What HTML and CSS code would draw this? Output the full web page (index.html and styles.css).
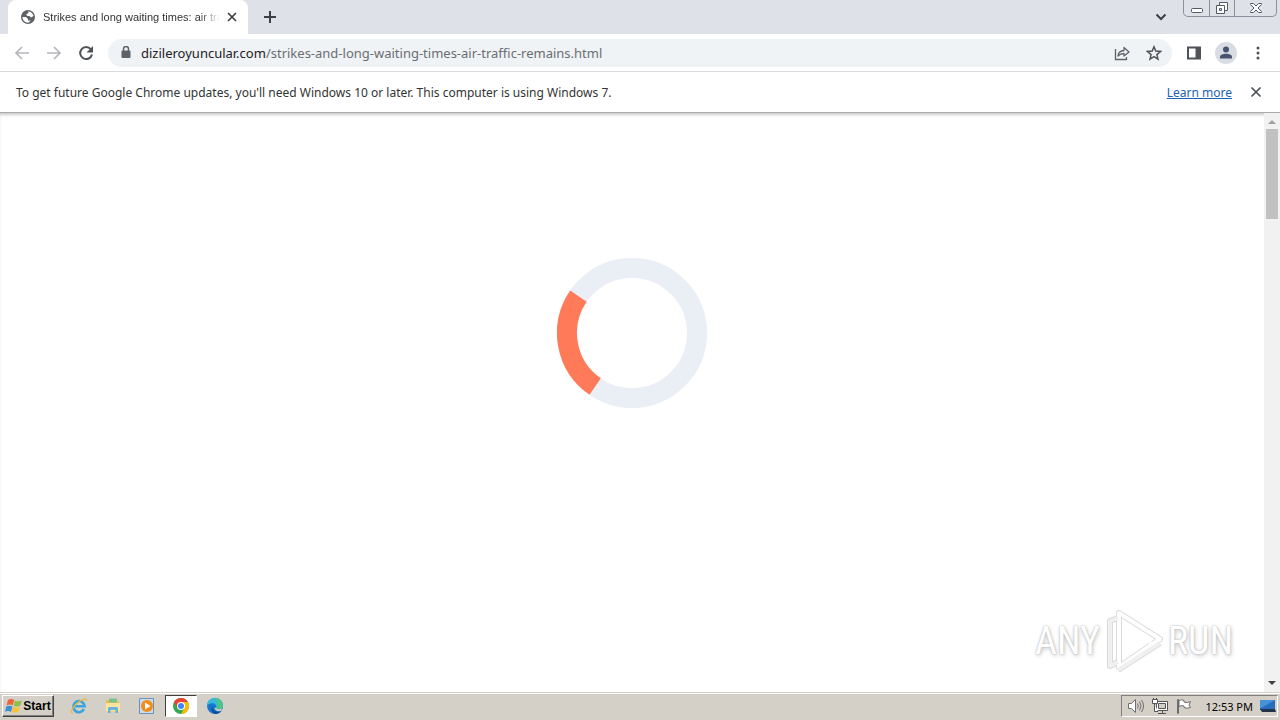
FILE: index.html
```html
<!DOCTYPE html>
<html lang="en">
<head>
  <meta charset="UTF-8">
  <title>Strikes and long waiting times: air traffic remains</title>
  <link rel="stylesheet" href="styles.css">
</head>
<body>
  <!-- Tab strip -->
  <header class="tab-strip">
    <div class="tab">
      <svg class="favicon" viewBox="0 0 16 16" width="16" height="16">
        <circle cx="8" cy="8" r="7" fill="#5f6368"/>
        <path d="M8 2.500c2.500-.2 5 1.700 5.500 4.500L11 8.500 9.500 7H7.500L6 5.500 8.500 4zM2.500 8H6l2 2v1.500H10.500l-1.500 2C5.500 14 2.500 11.500 2.500 8z" fill="#fff"/>
      </svg>
      <span class="tab-title">Strikes and long waiting times: air traffic remains</span>
      <button class="tab-close" aria-label="Close tab">
        <svg viewBox="0 0 16 16" width="16" height="16"><path d="M4 4l8 8M12 4l-8 8" stroke="#3c4043" stroke-width="1.700"/></svg>
      </button>
    </div>
    <button class="icon-btn new-tab" aria-label="New tab">
      <svg viewBox="0 0 16 16" width="16" height="16"><path d="M8 2v12M2 8h12" stroke="#3c4043" stroke-width="2"/></svg>
    </button>
    <button class="icon-btn tab-search" aria-label="Search tabs">
      <svg viewBox="0 0 16 16" width="16" height="16"><path d="M3.500 5.500L8 10l4.500-4.500" fill="none" stroke="#3c4043" stroke-width="2"/></svg>
    </button>
    <div class="window-controls">
      <button class="win-min" aria-label="Minimize">
        <svg viewBox="0 0 14 14" width="14" height="14"><rect x="1.500" y="7.500" width="11" height="4" rx="1" fill="#fff" stroke="#555b66"/></svg>
      </button>
      <button class="win-max" aria-label="Restore">
        <svg viewBox="0 0 14 14" width="14" height="14"><path d="M4.500 1.500h8v8h-8z" fill="#fff" stroke="#555b66"/><path d="M1.500 4.500h8v8h-8z" fill="#fff" stroke="#555b66"/><path d="M4.500 7.500h2v2h-2z" fill="#dee1e6" stroke="#555b66"/></svg>
      </button>
      <button class="win-close" aria-label="Close">
        <svg viewBox="0 0 14 14" width="14" height="14"><path d="M1.500 2.500h3L7 5l2.500-2.500h3v1L9 7l3.500 3.500v1h-3L7 9l-2.500 2.500h-3v-1L5 7 1.500 3.500z" fill="#fff" stroke="#555b66"/></svg>
      </button>
    </div>
  </header>

  <!-- Toolbar -->
  <nav class="toolbar">
    <button class="icon-btn" aria-label="Back">
      <svg viewBox="0 0 16 16" width="16" height="16"><path d="M15 8H2.500M8 2L2 8l6 6" fill="none" stroke="#b5b7ba" stroke-width="1.700"/></svg>
    </button>
    <button class="icon-btn" aria-label="Forward">
      <svg viewBox="0 0 16 16" width="16" height="16"><path d="M1 8h12.500M8 2l6 6-6 6" fill="none" stroke="#b5b7ba" stroke-width="1.700"/></svg>
    </button>
    <button class="icon-btn" aria-label="Reload">
      <svg viewBox="0 0 16 16" width="16" height="16"><path d="M12.800 4.200A6 6 0 1 0 14 9.500" fill="none" stroke="#4f5358" stroke-width="2"/><path d="M15 1v6.500H8.500z" fill="#4f5358"/></svg>
    </button>
    <div class="omnibox">
      <svg class="lock" viewBox="0 0 12 14" width="12" height="14"><rect x="1.500" y="4.500" width="9" height="7.500" rx="1" fill="#5f6368"/><path d="M3.500 5V3a2.500 2.500 0 0 1 5 0v2" fill="none" stroke="#5f6368" stroke-width="1.500"/></svg>
      <div class="url"><span class="host">dizileroyuncular.com</span>/strikes-and-long-waiting-times-air-traffic-remains.html</div>
      <button class="icon-btn" aria-label="Share">
        <svg viewBox="0 0 16 16" width="16" height="16"><path d="M1.500 4v10.500h11V12" fill="none" stroke="#5f6368" stroke-width="1.300"/><path d="M4 11c.3-3.600 2.500-5.300 6-5.500V2.500L15 7l-5 4V8.500c-2.500 0-4.500.8-6 2.500z" fill="none" stroke="#5f6368" stroke-width="1.300" stroke-linejoin="round"/></svg>
      </button>
      <button class="icon-btn" aria-label="Bookmark">
        <svg viewBox="0 0 16 16" width="16" height="16"><path d="M8 1.800l1.800 4.300 4.700.4-3.600 3.100 1.100 4.600L8 11.700l-4 2.500 1.100-4.600-3.600-3.100 4.700-.4z" fill="none" stroke="#4f5358" stroke-width="1.500"/></svg>
      </button>
    </div>
    <div class="toolbar-actions">
      <button class="icon-btn" aria-label="Side panel">
        <svg viewBox="0 0 16 16" width="16" height="16"><path d="M2 2.500h12v11H2z" fill="none" stroke="#4f5358" stroke-width="2"/><path d="M9.500 2H14v12H9.500z" fill="#4f5358"/></svg>
      </button>
      <button class="icon-btn" aria-label="Profile">
        <svg viewBox="0 0 22 22" width="22" height="22"><circle cx="11" cy="11" r="11" fill="#d8dce3"/><circle cx="11" cy="7.500" r="3" fill="#47536f"/><path d="M5 16.500v-1.500c0-2 3-3.200 6-3.200s6 1.200 6 3.200v1.500z" fill="#47536f"/></svg>
      </button>
      <button class="icon-btn" aria-label="Menu">
        <svg viewBox="0 0 16 16" width="16" height="16" fill="#4f5358"><circle cx="8" cy="3" r="1.500"/><circle cx="8" cy="8" r="1.500"/><circle cx="8" cy="13" r="1.500"/></svg>
      </button>
    </div>
  </nav>

  <!-- Info bar -->
  <section class="infobar">
    <p>To get future Google Chrome updates, you'll need Windows 10 or later. This computer is using Windows 7.</p>
    <a href="#">Learn more</a>
    <button class="infobar-close" aria-label="Dismiss">
      <svg viewBox="0 0 16 16" width="16" height="16"><path d="M3.500 3.500l9 9M12.500 3.500l-9 9" stroke="#4f5358" stroke-width="1.700"/></svg>
    </button>
  </section>

  <!-- Page -->
  <main class="viewport">
    <div class="page">
      <svg class="spinner" viewBox="0 0 150 150" width="150" height="150">
        <circle cx="75" cy="75" r="65" fill="none" stroke="#eaeff6" stroke-width="20"/>
        <path d="M38.200 128.600A65 65 0 0 1 21.400 38.200" fill="none" stroke="#ff7a59" stroke-width="20"/>
      </svg>
    </div>
    <div class="scrollbar">
      <svg viewBox="0 0 16 16" width="16" height="16"><path d="M4 11l4-4 4 4z" fill="#a0a0a0"/></svg>
      <div class="thumb"></div>
      <svg class="arrow-down" viewBox="0 0 16 16" width="16" height="16"><path d="M4 5l4 4 4-4z" fill="#404040"/></svg>
    </div>
    <div class="watermark">
      <span>ANY</span>
      <svg viewBox="0 0 60 64" width="60" height="64" fill="none" stroke-linejoin="round">
        <g stroke="#dadada" stroke-width="6">
          <path d="M15 4l41 26-41 28z"/><path d="M14 9l-8 3v45l8-4M14 61l42-27"/>
        </g>
        <g stroke="#fff" stroke-width="4">
          <path d="M15 4l41 26-41 28z"/><path d="M20 18l29 17" stroke-width="3"/><path d="M14 9l-8 3v45l8-4M14 61l42-27" stroke="#f0f0f0"/>
        </g>
      </svg>
      <span>RUN</span>
    </div>
  </main>

  <!-- Taskbar -->
  <footer class="taskbar">
    <button class="start">
      <svg viewBox="0 0 18 16" width="18" height="16">
        <path d="M3 2c2.500-1.500 4.500-1.200 6.200 0L7.800 7.300C6 6.300 4 6.300 1.600 7.300z" fill="#ee6338"/>
        <path d="M10 2.500c2.200 1.200 4.500 1 7 0l-1.700 5.300c-2.200 1-4.500.9-6.700-.1z" fill="#8cc04a"/>
        <path d="M1.300 8.300c2.500-1 4.500-.8 6.200.2L6 14c-1.800-1.200-3.800-1.200-6-.3z" fill="#3c91d5"/>
        <path d="M8.300 8.700c2.200 1 4.500 1 6.700.1l-1.600 5.200c-2.200 1-4.400.9-6.500-.1z" fill="#f9c333"/>
      </svg>
      Start
    </button>
    <div class="quick-launch">
      <button class="task" aria-label="Internet Explorer">
        <svg viewBox="0 0 18 18" width="18" height="18"><path d="M14 12.200a5.600 5.600 0 1 1 .6-3H5" fill="none" stroke="#39a5dc" stroke-width="2.600"/><path d="M3 15.800C-.5 17 2 10.500 8 5.500 12.500 2 17 .5 16.300 3.800" fill="none" stroke="#e9b83b" stroke-width="1.300"/></svg>
      </button>
      <button class="task" aria-label="Explorer">
        <svg viewBox="0 0 18 18" width="18" height="18"><path d="M2 3h5l1 1.500h7V15H2z" fill="#e9bd55"/><path d="M5 1.500h8v4H5z" fill="#7bc38b"/><path d="M2 6h14v8.500H2z" fill="#f9e49a"/><path d="M4 16v-4.500c0-1 .5-1.500 1.500-1.500h7c1 0 1.500.5 1.500 1.500V16h-2.500v-3h-5v3z" fill="#6bb3df"/></svg>
      </button>
      <button class="task" aria-label="Media Player">
        <svg viewBox="0 0 18 18" width="18" height="18"><path d="M1.500 1.500h14v15h-14z" fill="#c9dced" stroke="#6993b8"/><circle cx="9" cy="9" r="6" fill="#f48b16"/><path d="M7 5.500L12.500 9 7 12.500z" fill="#fff"/></svg>
      </button>
      <button class="task active" aria-label="Chrome">
        <svg viewBox="0 0 18 18" width="18" height="18"><circle cx="9" cy="9" r="8" fill="#34a853"/><path d="M2.070 5L9 5H15.930A8 8 0 0 1 9 17l3.460-6z" fill="#fbbc05"/><path d="M2.070 5A8 8 0 0 1 15.930 5H9l-3.460 6z" fill="#ea4335"/><circle cx="9" cy="9" r="4" fill="#fff"/><circle cx="9" cy="9" r="3" fill="#4285f4"/></svg>
      </button>
      <button class="task" aria-label="Edge">
        <svg viewBox="0 0 18 18" width="18" height="18"><circle cx="9" cy="9" r="8" fill="#1679cf"/><path d="M1 9a8 8 0 0 1 16-.5c0 3-2.500 4-5 3.800-1.500-.1-2-.8-1.500-1.800C11 8 8.500 6 6 6.200 3.500 6.400 1.500 7.500 1 9z" fill="#35b9dd"/><path d="M9 1a8 8 0 0 1 8 7.500c0 3-2.500 4-5 3.800-1.500-.1-2-.8-1.500-1.800 1-3 1-6-1.500-9.500z" fill="#4cc48a"/><path d="M10.500 10.500c-.5 1 0 1.700 1.500 1.800 2 .2 3.500-.3 4.400-1.500L15 14q-5 1-6.500-3z" fill="#d4d0c8"/><path d="M7 8.500c-1.500 3 1 6.500 5 6.300 1.500 0 3-.6 4-1.600A8 8 0 0 1 9 17C5 15.500 4.500 10.500 7 8.500z" fill="#114a9a"/></svg>
      </button>
    </div>
    <div class="tray">
      <svg viewBox="0 0 18 18" width="18" height="18" fill="#fff" stroke="#6d6d6d"><path d="M1.500 6.500h3l4-4v13l-4-4h-3z"/><path d="M10.500 6.500q1.500 2.500 0 5M12.500 4.500q3 4.500 0 9M14.500 3q4 6 0 12" fill="none"/></svg>
      <svg viewBox="0 0 18 18" width="18" height="18" fill="#fff" stroke="#555"><path d="M5.500 4.500h11v9h-11zM7 16.500h8M11.500 14v2"/><path d="M7.500 6.500h7v5h-7z" fill="#d4d0c8"/><path d="M1.500 2.500h5v4h-5zM2.500 1v2M5.500 1v2M3.500 7v7.500H7"/></svg>
      <svg viewBox="0 0 18 18" width="18" height="18" fill="#fff" stroke="#6d6d6d"><path d="M3.500 2.500v14h-1v-14zM4 3.500q3-1.500 5 0v1.500q3 1.500 6.500-.5L14 8l1.500 2.500q-3.500 1.500-6.500 0V9q-2.500-1-5 .500z"/></svg>
      <time>12:53 PM</time>
      <svg viewBox="0 0 18 18" width="18" height="18"><path d="M1 3h15v10H1z" fill="#286dbb"/><path d="M1 3h15L4 10l-3 1z" fill="#4592d8"/><path d="M1 12h15l1 3H3z" fill="#22334b"/></svg>
    </div>
  </footer>
</body>
</html>
```
FILE: styles.css
```css
* {
  box-sizing: border-box;
}

body {
  margin: 0;
  height: 100vh;
  display: flex;
  flex-direction: column;
  overflow: hidden;
  font-family: Tahoma, "Noto Sans", sans-serif;
  font-size: 12px;
  color: #333;
  background: #fff;
}

button {
  padding: 0;
  border: 0;
  background: none;
  font: inherit;
  color: inherit;
  display: flex;
  align-items: center;
  justify-content: center;
}

svg {
  display: block;
  flex: none;
}

.icon-btn {
  width: 28px;
  height: 28px;
  flex: none;
}

/* Tab strip */
.tab-strip {
  display: flex;
  align-items: center;
  height: 34px;
  padding: 0 3px 0 8px;
  background: #dee1e8;
}

.tab {
  display: flex;
  align-items: center;
  width: 240px;
  height: 34px;
  padding: 0 8px 0 12px;
  background: #fff;
  border-radius: 8px 8px 0 0;
}

.tab-title {
  flex: 1;
  margin: 0 4px 0 7px;
  overflow: hidden;
  white-space: nowrap;
  font-family: Tahoma, "Liberation Sans", sans-serif;
  font-size: 11px;
  -webkit-mask-image: linear-gradient(to right, #000 88%, transparent);
  mask-image: linear-gradient(to right, #000 88%, transparent);
}

.tab-close {
  width: 16px;
  height: 16px;
}

.new-tab {
  margin-left: 8px;
}

.tab-search {
  margin-left: auto;
  margin-right: 8px;
}

.window-controls {
  display: flex;
  align-self: flex-start;
  height: 17px;
  border: 1px solid #8b909c;
  border-top: 0;
  border-radius: 0 0 5px 5px;
}

.window-controls button {
  width: 25px;
}

.window-controls button + button {
  border-left: 1px solid #8b909c;
}

.window-controls .win-close {
  width: 42px;
}

/* Toolbar */
.toolbar {
  display: flex;
  align-items: center;
  gap: 4px;
  height: 38px;
  padding: 0 8px;
  border-bottom: 1px solid #d9dbde;
}

.omnibox {
  display: flex;
  align-items: center;
  gap: 4px;
  flex: 1;
  height: 28px;
  margin: 0 4px;
  padding: 0 4px 0 12px;
  border-radius: 14px;
  background: #f0f3f5;
}

.url {
  flex: 1;
  margin-left: 5px;
  font-size: 13px;
  white-space: nowrap;
  color: #6a6e73;
}

.host {
  color: #202124;
}

.toolbar-actions {
  display: flex;
  gap: 4px;
}

/* Info bar */
.infobar {
  display: flex;
  align-items: center;
  height: 41px;
  padding: 0 16px;
  border-bottom: 1px solid #aaa;
}

.infobar p {
  flex: 1;
  margin: 0;
}

.infobar a {
  color: #1a62b4;
}

.infobar-close {
  margin-left: 16px;
}

/* Page */
.viewport {
  position: relative;
  display: flex;
  flex: 1;
  min-height: 0;
  box-shadow: inset 0 3px 3px -1px #ccc;
}

.page {
  flex: 1;
  display: flex;
  justify-content: center;
  align-items: flex-start;
  padding-top: 145px;
}

.scrollbar {
  display: flex;
  flex-direction: column;
  width: 16px;
  background: #f1f1f1;
}

.thumb {
  height: 90px;
  margin: 0 2px;
  background: #c1c1c1;
}

.arrow-down {
  margin-top: auto;
}

.watermark {
  position: absolute;
  right: 47px;
  bottom: 19px;
  display: flex;
  align-items: center;
  gap: 4px;
  font-family: "Roboto Condensed", "Liberation Sans Narrow", "Liberation Sans", sans-serif;
  font-size: 38px;
  color: #fff;
  text-shadow: 0 0 2px #aaa, 1px 2px 4px #ccc;
}

/* Taskbar */
.taskbar {
  display: flex;
  align-items: center;
  height: 28px;
  padding-bottom: 1px;
  padding-left: 2px;
  padding-right: 2px;
  background: #d4d0c8;
  border-top: 1px solid #d4d0c8;
  box-shadow: inset 0 1px #fff;
  color: #000;
}

.start {
  width: 52px;
  height: 22px;
  font-family: Tahoma, "Liberation Sans", sans-serif;
  font-size: 12px;
  font-weight: bold;
  border: 1px solid;
  border-color: #fff #404040 #404040 #fff;
  box-shadow: inset -1px -1px #808080;
}

.quick-launch {
  display: flex;
  gap: 2px;
  margin-left: 9px;
}

.task {
  width: 32px;
  height: 22px;
}

.task.active {
  background: #fff;
  border: 1px solid;
  border-color: #404040 #fff #fff #404040;
}

.tray {
  display: flex;
  align-items: center;
  gap: 6px;
  height: 22px;
  margin-left: auto;
  padding: 0 0 0 5px;
  border: 1px solid;
  border-color: #808080 #fff #fff #808080;
}

.tray time {
  margin: 0 0 0 6px;
  font-size: 11px;
}
```
